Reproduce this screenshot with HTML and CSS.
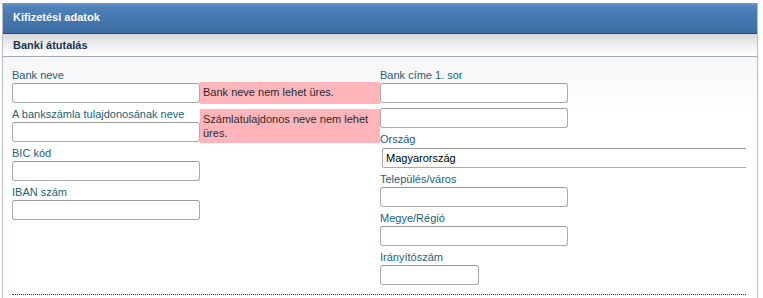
FILE: index.html
```html
<!DOCTYPE html>
<html lang="hu">
<head>
<meta charset="utf-8">
<title>Kifizetési adatok</title>
<link rel="stylesheet" href="styles.css">
</head>
<body>
<div class="panel">
  <div class="panel-head">Kifizetési adatok</div>
  <div class="panel-sub">Banki átutalás</div>
  <div class="panel-body">
    <div class="cols">
      <div class="col col-left">
        <div class="field">
          <label class="lbl">Bank neve</label>
          <input class="inp" type="text">
          <div class="err">Bank neve nem lehet üres.</div>
        </div>
        <div class="field">
          <label class="lbl">A bankszámla tulajdonosának neve</label>
          <input class="inp" type="text">
          <div class="err">Számlatulajdonos neve nem lehet üres.</div>
        </div>
        <div class="field">
          <label class="lbl">BIC kód</label>
          <input class="inp" type="text">
        </div>
        <div class="field">
          <label class="lbl">IBAN szám</label>
          <input class="inp" type="text">
        </div>
      </div>
      <div class="col col-right">
        <label class="lbl">Bank címe 1. sor</label>
        <input class="inp inp-gap" type="text">
        <input class="inp" type="text">
        <label class="lbl lbl-select">Ország</label>
        <input class="inp inp-select" type="text" value="Magyarország" readonly>
        <label class="lbl">Település/város</label>
        <input class="inp" type="text">
        <label class="lbl">Megye/Régió</label>
        <input class="inp" type="text">
        <label class="lbl">Irányítószám</label>
        <input class="inp inp-short" type="text">
      </div>
    </div>
    <div class="divider"></div>
  </div>
</div>
</body>
</html>
```

FILE: styles.css
```css
html, body {
  margin: 0;
  padding: 0;
  background: #ffffff;
}

body {
  font-family: "Liberation Sans", Arial, sans-serif;
  font-size: 11px;
  color: #222;
}

.panel {
  margin: 3px 5px 0 2px;
  border-left: 1px solid #b9bec4;
  border-right: 1px solid #b9bec4;
  height: 295px;
  overflow: hidden;
  background: linear-gradient(#eef0f2 0px, #f6f7f8 60px, #ffffff 110px);
}

.panel-head {
  height: 30px;
  line-height: 28px;
  padding-left: 10px;
  color: #ffffff;
  font-weight: bold;
  font-size: 11px;
  background: linear-gradient(#6a98cc 0px, #4f82bb 4px, #4679b2 14px, #3e6ea4 29px);
  border-bottom: 1px solid #2a4b70;
  border-radius: 3px 3px 0 0;
  margin: 0 -1px;
  padding-right: 1px;
  border-left: 1px solid #3d6290;
  border-right: 1px solid #3d6290;
}

.panel-sub {
  height: 22px;
  line-height: 22px;
  padding-left: 10px;
  font-weight: bold;
  color: #1a3352;
  background: linear-gradient(#d6d6d7 0px, #e9e9ea 8px, #f8f8f8 17px, #ffffff 22px);
  border-bottom: 1px solid #a9adb2;
}

.panel-body {
  padding: 11px 11px 0 9px;
}

.cols {
  display: flex;
}

.col-left {
  width: 368px;
  flex: none;
}

.col-right {
  flex: 1;
  overflow: hidden;
  display: flex;
  flex-direction: column;
  align-items: flex-start;
}

.field {
  display: grid;
  grid-template-columns: 188px 180px;
  grid-template-rows: auto auto;
  margin-bottom: 4px;
}

.field .lbl {
  grid-column: 1;
  grid-row: 1;
}

.field .inp {
  grid-column: 1;
  grid-row: 2;
  margin-bottom: 0;
}

.lbl {
  display: block;
  line-height: 14px;
  color: #1d5f74;
  margin-bottom: 1px;
  white-space: nowrap;
}

.inp {
  display: block;
  box-sizing: border-box;
  width: 188px;
  height: 20px;
  margin: 0 0 4px 0;
  padding: 0 3px;
  border: 1px solid #a9a9a9;
  border-top-color: #9a9a9a;
  border-radius: 3px;
  background: #ffffff;
  font-family: "Liberation Sans", Arial, sans-serif;
  font-size: 11px;
  color: #000;
  outline: none;
}

.col-right .inp-gap {
  margin-bottom: 5px;
}

.lbl-select {
  margin-bottom: 2px;
}

.inp-select {
  width: 380px;
  margin-left: 2px;
  height: 20px;
  border-radius: 2px;
  padding-left: 3px;
}

.inp-short {
  width: 99px;
}

.err {
  grid-column: 2;
  grid-row: 1 / 3;
  align-self: end;
  margin-bottom: -1px;
  background: #ffb5ba;
  color: #2a2a2a;
  line-height: 14px;
  padding: 3px 3px;
  min-height: 16px;
}

.divider {
  margin-top: 5px;
  border-top: 1px dotted #333;
}
```
